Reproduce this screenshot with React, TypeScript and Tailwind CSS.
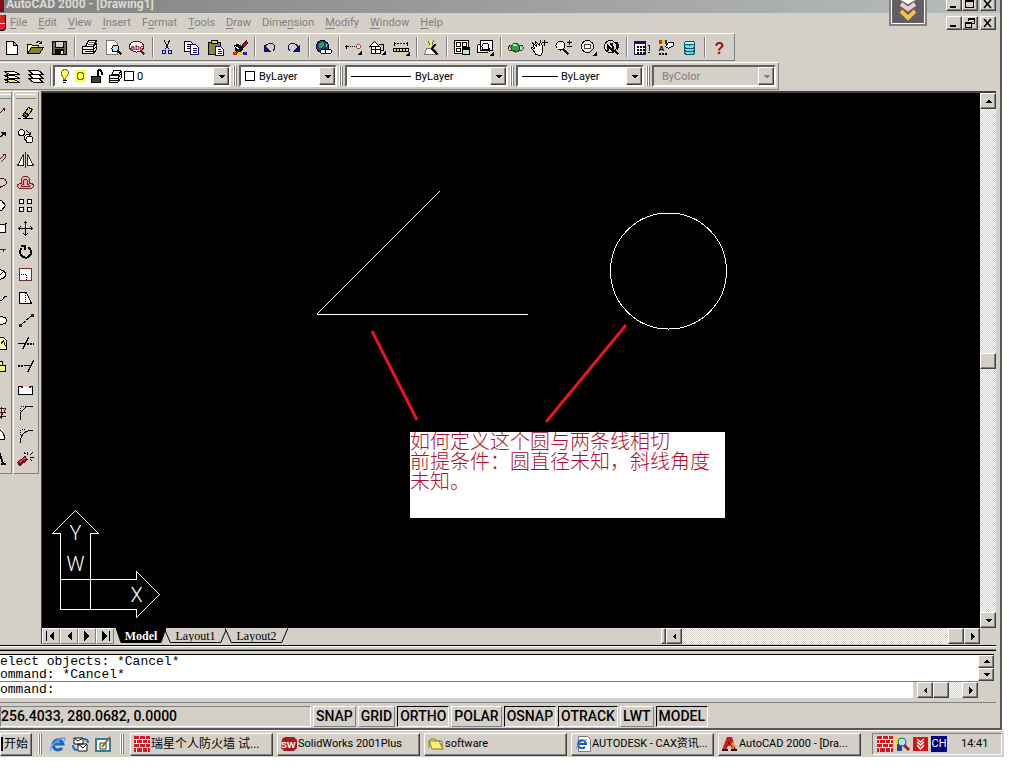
import type { ReactNode } from 'react';
import clsx from 'clsx';

const RAISED =
  'border border-t-white border-l-white border-r-[#404040] border-b-[#404040] bg-[#d4d0c8] shadow-[inset_-1px_-1px_0_#808080]';
const SUNKEN = 'border border-t-[#808080] border-l-[#808080] border-r-white border-b-white';
const TRACK = 'bg-[repeating-conic-gradient(#ffffff_0_25%,#d4d0c8_0_50%)] bg-[length:2px_2px]';

const MENUS = [
  ['', 'F', 'ile'],
  ['', 'E', 'dit'],
  ['', 'V', 'iew'],
  ['', 'I', 'nsert'],
  ['F', 'o', 'rmat'],
  ['', 'T', 'ools'],
  ['', 'D', 'raw'],
  ['Dime', 'n', 'sion'],
  ['', 'M', 'odify'],
  ['', 'W', 'indow'],
  ['', 'H', 'elp'],
];

const STANDARD_ICONS: Record<string, ReactNode> = {
  New: <path d="M4 3h7l4 4v9H4zM11 3v4h4" fill="#fff" />,
  Open: (
    <>
      <path d="M1 15V6h4l1 1h6v3" fill="#ffff9c" />
      <path d="M1 15l4-6h12l-4 6z" fill="#84842c" />
      <path d="M10 4q3-2 5 1M15 2v3h-3" />
    </>
  ),
  Save: (
    <>
      <path d="M2 3h14v13H2z" fill="#6b6b3c" />
      <path d="M5 3h8v6H5z" fill="#d4d0c8" />
      <path d="M5 11h8v5H5z" fill="#111" />
      <path d="M11 12v3" stroke="#fff" strokeWidth="2" />
    </>
  ),
  Print: (
    <>
      <path d="M5 8l3-6h8l-3 6z" fill="#fff" />
      <path d="M8 4h6M7 6h6" stroke="#666" />
      <path d="M2 8h11l3-3v6l-3 4H2z" fill="#eeece8" />
      <path d="M2 11h11l3-3M4 13h8M13 8v7" />
    </>
  ),
  'Print Preview': (
    <>
      <path d="M2 2h8l3 3v11H2z" fill="#fff" stroke="#777" />
      <circle cx="11" cy="10" r="3.5" fill="#bde0ea" />
      <path d="M13 12l4 4" strokeWidth="2" />
    </>
  ),
  Find: (
    <>
      <ellipse cx="8" cy="8" rx="7" ry="5.5" fill="#fff" stroke="#701020" />
      <path d="M12 12l4 4" stroke="#701020" strokeWidth="2" />
      <text x="2" y="11" fontSize="8" fontWeight="bold" fill="#801020" stroke="none">abc</text>
    </>
  ),
  Cut: (
    <>
      <path d="M6 2l4 9M11 2l-4 9" />
      <circle cx="5.500" cy="13.500" r="2" stroke="#101080" />
      <circle cx="11.500" cy="13.500" r="2" stroke="#101080" />
    </>
  ),
  Copy: (
    <>
      <path d="M2 3h6l3 3v7H2zM4 6h3M4 8h5M4 10h5" fill="#fff" />
      <path d="M8 6h5l3 3v7H8zM10 10h4M10 12h4M10 14h4" fill="#fff" stroke="#101060" />
    </>
  ),
  Paste: (
    <>
      <path d="M2 4h12v12H2z" fill="#8a8448" />
      <path d="M5 2h6v3H5z" fill="#d9d06a" />
      <path d="M9 8h5l3 3v6H9zM11 11h3M11 13h4M11 15h4" fill="#fff" stroke="#101080" />
    </>
  ),
  'Match Properties': (
    <>
      <path d="M12 6l4-4 1 3-4 4z" fill="#a01010" stroke="#600" />
      <path d="M4 7l4-1 5 3-3 4-4 1z" fill="#111" />
      <path d="M5 8l4 3" stroke="#fff" />
      <path d="M2 15h4" stroke="#e02020" strokeWidth="3" />
      <path d="M7 15h4" stroke="#f0d020" strokeWidth="3" />
      <path d="M12 15h4" stroke="#2020c0" strokeWidth="3" />
    </>
  ),
  Undo: (
    <>
      <path d="M4 9c3-6 11-5 10 0c0 2-1 3-2 4" stroke="#101070" />
      <path d="M3 6v7h7z" fill="#101070" stroke="none" />
    </>
  ),
  Redo: (
    <>
      <path d="M14 9c-3-6-11-5-10 0c0 2 1 3 2 4" stroke="#101070" />
      <path d="M15 6v7H8z" fill="#101070" stroke="none" />
    </>
  ),
  Hyperlink: (
    <>
      <circle cx="8" cy="8" r="6" fill="#183c90" />
      <path d="M4 5l4-2 2 3-3 4-3-1z" fill="#28a048" stroke="none" />
      <path d="M11 4l2 3-2 2z" fill="#88d0e0" stroke="none" />
      <rect x="6" y="11" width="6" height="4" rx="2" fill="#fff" />
      <rect x="11" y="11" width="6" height="4" rx="2" fill="#fff" />
    </>
  ),
  'Temporary Tracking': (
    <>
      <path d="M1 8h13" strokeDasharray="1 1" />
      <path d="M2 6v4M0 8h4" />
      <circle cx="14" cy="8" r="2" stroke="#c04050" fill="#fff" />
      <path d="M17 12v4h-4z" fill="#000" stroke="none" />
    </>
  ),
  UCS: (
    <>
      <path d="M3 8v7h9V8M1 8l5-5 5 5z" fill="#fff" />
      <path d="M3 11h8M7 8v7M10 6h5v6h-4" />
      <path d="M17 12v4h-4z" fill="#000" stroke="none" />
    </>
  ),
  Distance: (
    <>
      <path d="M1 5h15" strokeDasharray="2 1" />
      <path d="M2 3v4M15 3v4" />
      <path d="M1 10h15v3H1z" fill="#e8e060" />
      <path d="M4 10v2M7 10v2M10 10v2M13 10v2" />
      <path d="M17 13v4h-4z" fill="#000" stroke="none" />
    </>
  ),
  'Redraw All': (
    <>
      <path d="M4 10h7l5 6H2z" fill="#fff" stroke="#777" />
      <path d="M9 10l4-4M9 10l6 6" strokeWidth="2" />
      <path d="M6 2c0 4 2 6 4 8M11 2L9 8" stroke="#706c00" />
      <path d="M8 2l1 6" stroke="#f4f060" strokeWidth="2" />
    </>
  ),
  'Aerial View': (
    <>
      <path d="M2 2h14v13H2z" fill="#fff" />
      <path d="M4 4h4v4H4zM4 10h4v3H4zM10 4h4v4h-4z" />
      <path d="M10 9h7v7h-7z" fill="#b8e0d8" />
      <path d="M10 10h7" strokeWidth="2" />
    </>
  ),
  'Named Views': (
    <>
      <path d="M4 2h12v10H4zM1 6h3M1 6v8h10" fill="#fff" />
      <circle cx="9" cy="8" r="3.500" />
      <path d="M12 10l2 3" strokeWidth="2" />
      <path d="M17 13v4h-4z" fill="#000" stroke="none" />
    </>
  ),
  '3D Orbit': (
    <>
      <circle cx="9" cy="9" r="4.5" fill="#30a048" stroke="#105020" />
      <path d="M6 7C0 7 0 12 6 12c6 2 12-1 11-3-1-3-4-2-4-1" stroke="#404010" />
      <path d="M7 7l3-1" stroke="#b0f0b0" strokeWidth="2" />
    </>
  ),
  'Pan Realtime': (
    <>
      <path d="M5 16c-1-4-4-5-4-7l3 1-2-6 4 4-1-5 4 4 1-4 2 5v6l-2 3z" fill="#fff" />
      <path d="M14 1v6M11 4h6" />
    </>
  ),
  'Zoom Realtime': (
    <>
      <circle cx="6" cy="7" r="4.500" fill="#fff" />
      <path d="M9 11l5 5" strokeWidth="2" />
      <path d="M12 4h5M14.500 1v5M12 8h5" />
    </>
  ),
  'Zoom Window': (
    <>
      <circle cx="9" cy="8" r="6" fill="#eee" />
      <path d="M6 6h6v4H6z" stroke="#444" fill="#fff" />
      <path d="M18 13v4h-4z" fill="#000" stroke="none" />
    </>
  ),
  'Zoom Previous': (
    <>
      <circle cx="8" cy="8" r="6" fill="#ddd" />
      <path d="M5 12V7l5 5V7q0-2-3-2" strokeWidth="2" />
      <path d="M12 12l4 4M14 4q3 3 0 7" strokeWidth="2" />
    </>
  ),
  Properties: (
    <>
      <path d="M2 3h11v13H2z" fill="#fff" stroke="#101060" />
      <path d="M2 4h11" stroke="#101080" strokeWidth="2" />
      <path d="M4 8h8M4 11h8M4 14h8" strokeDasharray="2 1" strokeWidth="2" />
      <path d="M15 7h2v5M15 14h2" stroke="#101080" />
    </>
  ),
  DesignCenter: (
    <>
      <path d="M2 3h3" stroke="#e02020" strokeWidth="4" />
      <path d="M5 3h3" stroke="#e8d020" strokeWidth="4" />
      <path d="M8 3h2" stroke="#2020a0" strokeWidth="4" />
      <text x="2" y="12" fontSize="8" fontWeight="bold" fill="#000" stroke="none">A</text>
      <path d="M2 15h9" strokeDasharray="2 1" strokeWidth="2" />
      <path d="M9 8l3-4h5v3l-5 3z" fill="#fff" />
    </>
  ),
  dbConnect: (
    <>
      <path d="M4 4v10c0 3 10 3 10 0V4" fill="#68dce8" stroke="#105868" />
      <ellipse cx="9" cy="4.500" rx="5" ry="2" fill="#c0f4f8" stroke="#105868" />
      <path d="M4 8c0 3 10 3 10 0M4 11c0 3 10 3 10 0" stroke="#105868" />
    </>
  ),
  Help: (
    <text x="4" y="15" fontSize="16" fontWeight="bold" fill="#9c1018" stroke="none">?</text>
  ),
};

const STANDARD_GROUPS = [
  ['New', 'Open', 'Save'],
  ['Print', 'Print Preview', 'Find'],
  ['Cut', 'Copy', 'Paste', 'Match Properties'],
  ['Undo', 'Redo'],
  ['Hyperlink'],
  ['Temporary Tracking', 'UCS', 'Distance'],
  ['Redraw All'],
  ['Aerial View', 'Named Views'],
  ['3D Orbit', 'Pan Realtime', 'Zoom Realtime', 'Zoom Window', 'Zoom Previous'],
  ['Properties', 'DesignCenter', 'dbConnect'],
  ['Help'],
];

// The draw toolbar is docked half off the window, only the right part of each icon shows
const DRAW_TOOLS: { name: string; icon: ReactNode }[] = [
  { name: 'Line', icon: <path d="M0 9l4-4M3 4h2v2" stroke="#401010" /> },
  { name: 'Construction Line', icon: <path d="M0 10l5-4M2 5h4v3z" fill="#000" /> },
  { name: 'Multiline', icon: <path d="M0 9l5-5M1 12l5-5M3 4h3v3" stroke="#502020" /> },
  { name: 'Polyline', icon: <path d="M0 5h3q4 1 4 4t-5 4H0M1 12v2" stroke="#401010" /> },
  { name: 'Polygon', icon: <path d="M0 4h2l4 5-4 5H0" fill="#fff" /> },
  { name: 'Rectangle', icon: <path d="M0 5h6v8H0M5 4h2" fill="#fff" /> },
  { name: 'Arc', icon: <path d="M0 7h6M4 6v3" stroke="#601010" /> },
  { name: 'Circle', icon: <path d="M0 4q6 1 6 5t-6 5M0 10l3-3" fill="#fff" /> },
  { name: 'Spline', icon: <path d="M0 12q3 1 5-4h2" /> },
  { name: 'Ellipse', icon: <path d="M0 5q7 0 7 4t-7 4" fill="#fff" /> },
  { name: 'Insert Block', icon: <path d="M0 3h4l3 3v9H0M1 10l3-4 2 6" fill="#ffffb0" /> },
  { name: 'Make Block', icon: <path d="M0 4h3v4h3v6H0M0 8h3" fill="#f4f080" /> },
  { name: 'Point', icon: null },
  { name: 'Hatch', icon: <path d="M0 5h6M0 9h6M0 13h6M2 3v12M0 15l6-9" stroke="#401818" /> },
  { name: 'Region', icon: <path d="M0 4q5 1 5 9H0" fill="#fff" /> },
  { name: 'Multiline Text', icon: <path d="M0 4l4 11M1 14h5" strokeWidth="2" /> },
];

const MODIFY_TOOLS: { name: string; icon: ReactNode }[] = [
  {
    name: 'Erase',
    icon: (
      <>
        <path d="M6 11l6-8 4 2-6 8z" fill="#d4d060" />
        <path d="M6 11l2-3 4 2-2 3z" fill="#6c4090" />
        <path d="M1 14h3M6 14h10" />
      </>
    ),
  },
  {
    name: 'Copy Object',
    icon: (
      <>
        <circle cx="5" cy="5" r="3" fill="#fff" />
        <circle cx="11" cy="10" r="3" fill="#fff" />
        <circle cx="13" cy="12" r="3.5" fill="#fff" />
        <path d="M10 3l4 4M14 4v3h-3" />
      </>
    ),
  },
  { name: 'Mirror', icon: <path d="M7 4v11H1zM11 4v11h6zM9 1v16" fill="#fff" stroke="#402020" /> },
  {
    name: 'Offset',
    icon: (
      <path
        d="M3 15q-2-1-2-3t4-2q-1-7 4-7t4 7q4 0 4 2t-2 3zM5 13q0-2 2-2-1-5 2-5t2 5q2 0 2 2z"
        fill="#f4a8ac"
        stroke="#702030"
      />
    ),
  },
  { name: 'Array', icon: <path d="M3 3h4v4H3zM11 3h4v4h-4zM3 11h4v4H3zM11 11h4v4h-4z" fill="#fff" /> },
  { name: 'Move', icon: <path d="M9 2v14M2 9h14M7 4l2-2 2 2M7 14l2 2 2-2M4 7L2 9l2 2M14 7l2 2-2 2" /> },
  { name: 'Rotate', icon: <path d="M5 6a5.500 5.500 0 1 0 7-1M4 3h4v4" strokeWidth="2" /> },
  {
    name: 'Scale',
    icon: (
      <>
        <path d="M3 3h12v12H3z" fill="#fff" stroke="#802030" />
        <path d="M4 9h6v6" strokeDasharray="1 1" />
      </>
    ),
  },
  {
    name: 'Stretch',
    icon: (
      <>
        <path d="M3 4h7l5 11H3z" fill="#fff" />
        <path d="M9 4v11" strokeDasharray="1 1" />
      </>
    ),
  },
  {
    name: 'Lengthen',
    icon: (
      <>
        <path d="M4 14L15 4" strokeDasharray="3 1" />
        <path d="M2 14h3M14 4h3" stroke="#501010" strokeWidth="3" />
      </>
    ),
  },
  {
    name: 'Trim',
    icon: (
      <>
        <path d="M1 9h8M6 15l6-12" />
        <path d="M10 9h7" strokeDasharray="2 1" strokeWidth="2" />
      </>
    ),
  },
  {
    name: 'Extend',
    icon: (
      <>
        <path d="M11 15l6-12M7 8h7" />
        <path d="M1 8h6" strokeDasharray="2 1" strokeWidth="2" />
      </>
    ),
  },
  {
    name: 'Break',
    icon: (
      <>
        <path d="M2 6h14v8H2z" fill="#fff" />
        <path d="M6 6h6" stroke="#d4d0c8" />
        <path d="M5 5v2M13 5v2" stroke="#701010" strokeWidth="2" />
      </>
    ),
  },
  {
    name: 'Chamfer',
    icon: (
      <>
        <path d="M4 16V9l6-6h6" />
        <path d="M4 7V3h5" strokeDasharray="1 1" />
      </>
    ),
  },
  {
    name: 'Fillet',
    icon: (
      <>
        <path d="M4 16q0-12 12-12" />
        <path d="M4 8V3h5" strokeDasharray="1 1" />
      </>
    ),
  },
  {
    name: 'Explode',
    icon: (
      <>
        <path d="M2 15l8-7" stroke="#601018" strokeWidth="5" />
        <path d="M3 13l6-5" stroke="#d83848" strokeWidth="2" />
        <path d="M11 5V2M13 6l3-3M13 8h4M9 5L8 3M14 10l2 2" />
      </>
    ),
  },
];

const STATUS_MODES = [
  { name: 'SNAP', on: false },
  { name: 'GRID', on: false },
  { name: 'ORTHO', on: true },
  { name: 'POLAR', on: false },
  { name: 'OSNAP', on: true },
  { name: 'OTRACK', on: true },
  { name: 'LWT', on: false },
  { name: 'MODEL', on: true },
];

function Icon({ children, width = 18 }: { children?: ReactNode; width?: number }) {
  return (
    <svg
      width={width}
      height="18"
      viewBox={`0 0 ${width} 18`}
      fill="none"
      stroke="#000"
      shapeRendering="crispEdges"
      fontFamily="Liberation Sans, sans-serif"
      className="shrink-0 overflow-visible"
      aria-hidden="true"
    >
      <g transform="translate(-.5 .5)">{children}</g>
    </svg>
  );
}

function Bricks() {
  return (
    <svg width="16" height="16" viewBox="0 0 16 16" shapeRendering="crispEdges" className="shrink-0" aria-hidden="true">
      <path d="M0 0h16v16H0z" fill="#d81820" />
      <path d="M0 3.500h16M0 7.500h16M0 11.500h16M5.500 0v3M11.500 0v3M2.500 4v3M8.500 4v3M13.500 4v3M5.500 8v3M11.500 8v3M2.500 12v4M8.500 12v4M13.500 12v4" stroke="#fff" />
    </svg>
  );
}

function ExplorerLogo() {
  return (
    <svg width="17" height="17" viewBox="0 0 17 17" fill="none" className="shrink-0" aria-hidden="true">
      <path d="M13 12a5 5 0 1 1 1-4H5" stroke="#1c64c8" strokeWidth="3" />
      <path d="M2 15C-1 13 8 2 15 2c2 0 1 2 0 3" stroke="#58a8e8" strokeWidth="1.500" />
    </svg>
  );
}

function AutoCadLogo() {
  return (
    <svg width="16" height="16" viewBox="0 0 16 16" className="shrink-0" aria-hidden="true">
      <path d="M5 1h5l4 13h-4l-1-4H6l-2 4H0z" fill="#c81820" />
      <path d="M7 5l1 3H6zM0 13h6v2H0z" fill="#300808" />
      <path d="M9 8h3v2h3M11 6v7" stroke="#e8c020" fill="none" />
      <path d="M9 14h6" stroke="#300808" strokeWidth="2" />
    </svg>
  );
}

const ARROWS = {
  up: 'M1 6h7L4.500 2.500z',
  down: 'M1 3h7L4.500 6.500z',
  left: 'M6 1v7L2.500 4.500z',
  right: 'M3 1v7l3.500-3.500z',
};

function Arrow({ dir, bar, gray }: { dir: keyof typeof ARROWS; bar?: boolean; gray?: boolean }) {
  return (
    <svg width="9" height="9" viewBox="0 0 9 9" shapeRendering="crispEdges" fill={gray ? '#808080' : '#000'} aria-hidden="true">
      <path d={ARROWS[dir]} />
      {bar && <path d={dir === 'left' ? 'M0 0h1v9H0z' : 'M8 0h1v9H8z'} />}
    </svg>
  );
}

function SheetArrow({ dir, bar }: { dir: 'left' | 'right'; bar: boolean }) {
  return (
    <svg width="10" height="10" viewBox="0 0 10 10" shapeRendering="crispEdges" aria-hidden="true">
      <path d={dir === 'left' ? 'M8 0v10L3 5z' : 'M2 0v10l5-5z'} />
      {bar && <path d={dir === 'left' ? 'M0 0h1v10H0z' : 'M9 0h1v10H9z'} />}
    </svg>
  );
}

function ScrollButton({ dir, className }: { dir: keyof typeof ARROWS; className: string }) {
  return (
    <button type="button" aria-label={`Scroll ${dir}`} className={clsx('flex shrink-0 items-center justify-center', RAISED, className)}>
      <Arrow dir={dir} />
    </button>
  );
}

function Divider() {
  return (
    <div className="flex w-1.5 shrink-0 justify-center">
      <div className="h-5 w-0.5 border-l border-[#808080] bg-white" />
    </div>
  );
}

function Grip() {
  return (
    <div className="flex shrink-0 px-0.5">
      <div className="h-5 w-0.5 border-r border-[#808080] bg-white" />
      <div className="h-5 w-0.5 border-r border-[#808080] bg-white" />
    </div>
  );
}

function Combo({ label, value, className, pad, disabled, children }: {
  label: string;
  value: string;
  className: string;
  pad: string;
  disabled?: boolean;
  children?: ReactNode;
}) {
  return (
    <div
      className={clsx(
        'relative flex h-[22px] shrink-0 border-2 border-t-[#606060] border-l-[#606060] border-r-white border-b-white',
        disabled ? 'bg-[#d4d0c8]' : 'bg-white',
        className,
      )}
    >
      <select
        aria-label={label}
        disabled={disabled}
        className={clsx(
          'w-full appearance-none bg-transparent pt-0.5 text-[11px] leading-4',
          disabled ? 'text-[#808080]' : 'text-black',
          pad,
        )}
      >
        <option>{value}</option>
      </select>
      <div className="pointer-events-none absolute inset-y-0 left-1 flex items-center">{children}</div>
      <div className={clsx('pointer-events-none absolute inset-y-0 right-0 flex w-4 items-center justify-center', RAISED)}>
        <Arrow dir="down" gray={disabled} />
      </div>
    </div>
  );
}

function WindowButtons({ restore }: { restore?: boolean }) {
  return (
    <div className="flex shrink-0">
      <button type="button" aria-label="Minimize" className={clsx('h-3.5 w-4', RAISED)}>
        <svg width="12" height="12" shapeRendering="crispEdges"><path d="M3 8h6v2H3z" /></svg>
      </button>
      <button type="button" aria-label="Maximize" className={clsx('mr-0.5 h-3.5 w-4', RAISED)}>
        <svg width="13" height="12" fill="none" stroke="#000" shapeRendering="crispEdges">
          <path d={restore ? 'M5.500 4V1.500h6v5H9M5 2.500h7M2.500 5.500h6v5h-6zM2 6.500h7' : 'M2.500 2.500h8v7h-8zM2 3.500h9'} />
        </svg>
      </button>
      <button type="button" aria-label="Close" className={clsx('h-3.5 w-4', RAISED)}>
        <svg width="13" height="12" stroke="#000" strokeWidth="1.500"><path d="M3 2l7 8M10 2l-7 8" /></svg>
      </button>
    </div>
  );
}

function MenuBar() {
  return (
    <div className="flex h-5 items-center">
      <div className="mr-1 h-4 w-1.5 shrink-0 rounded-br border-r border-b border-black bg-[#d82028]">
        <div className="mt-2 h-px bg-white" />
      </div>
      <nav className="flex grow gap-[11px] text-[11px] text-[#808080]">
        {MENUS.map(([before, key, after]) => (
          <button type="button" key={before + key + after}>
            {before}<span className="underline underline-offset-2">{key}</span>{after}
          </button>
        ))}
      </nav>
      <WindowButtons restore />
    </div>
  );
}

function StandardToolbar() {
  return (
    <div className="flex h-7 items-center self-start border border-l-0 border-t-white border-r-[#808080] border-b-[#808080]">
      {STANDARD_GROUPS.map((group, i) => (
        <div key={group[0]} className="flex items-center">
          {i > 0 && <Divider />}
          {group.map((name) => (
            <button type="button" key={name} aria-label={name} className="flex w-6 justify-center">
              <Icon>{STANDARD_ICONS[name]}</Icon>
            </button>
          ))}
        </div>
      ))}
      <div className="w-0.5" />
    </div>
  );
}

function LayerToolbar() {
  return (
    <div className="mt-px flex h-7 items-center self-start border border-l-0 border-t-white border-r-[#808080] border-b-[#808080] pr-0.5">
      <button type="button" aria-label="Make Object's Layer Current" className="flex w-6 justify-center">
        <Icon>
          <path d="M2 12h10l5 3H7z" fill="#f4f070" />
          <path d="M2 8h10l5 3H7z" fill="#fff" />
          <path d="M2 4h10l5 3H7z" fill="#fff" />
          <path d="M5 7v8H2M5 7H3" />
        </Icon>
      </button>
      <button type="button" aria-label="Layers" className="flex w-6 justify-center">
        <Icon>
          <path d="M2 11h10l5 4H7z" fill="#fff" />
          <path d="M2 7h10l5 4H7z" fill="#fff" />
          <path d="M2 3h10l5 4H7z" fill="#fff" />
        </Icon>
      </button>
      <div className="w-[5px]"><Divider /></div>
      <Combo label="Layer" value="0" className="w-[178px]" pad="pl-[82px]">
        <svg width="76" height="16" viewBox="0 0 76 16" fill="none" stroke="#000" shapeRendering="crispEdges" aria-hidden="true">
          <path d="M4.500 11c0-3-3-3-2-7 1-3 6-3 7 0 0 4-3 4-3 7z" fill="#ffff50" stroke="#88802c" />
          <path d="M4 12h4M4 14h3" />
          <path d="M16 2h11v12H16z" fill="#ffff40" stroke="none" />
          <circle cx="21.500" cy="8" r="3.500" stroke="#706c10" />
          <path d="M32 8h9v6h-9z" fill="#404020" />
          <path d="M38.500 8V4q2-4 4 0v3" strokeWidth="2" />
          <path d="M53 6l2-4h7l-2 4z" fill="#fff" />
          <path d="M50 7h9l3-3v6l-3 4h-9zM50 10h9l3-4M59 7v7M51 12h8" fill="#eee" />
          <path d="M65.500 3.500h9v9h-9z" fill="#fff" />
        </svg>
      </Combo>
      <Grip />
      <Combo label="Color" value="ByLayer" className="w-[98px]" pad="pl-[18px]">
        <div className="size-2.5 border border-black bg-white" />
      </Combo>
      <Grip />
      <Combo label="Linetype" value="ByLayer" className="w-[163px]" pad="pl-[68px]">
        <div className="h-px w-[60px] bg-black" />
      </Combo>
      <Grip />
      <Combo label="Lineweight" value="ByLayer" className="w-[128px]" pad="pl-[43px]">
        <div className="h-px w-9 bg-black" />
      </Combo>
      <Grip />
      <Combo label="Plot Style" value="ByColor" className="w-[124px]" pad="pl-2" disabled />
    </div>
  );
}

function SideToolbars() {
  return (
    <div className="flex shrink-0 items-start pr-0.5">
      <div className="w-3 border-r border-b border-t border-t-white border-r-[#808080] border-b-[#808080] pb-1">
        <div className="my-0.5 h-[5px] border-y border-t-white border-b-[#808080]" />
        {DRAW_TOOLS.map((tool) => (
          <button type="button" key={tool.name} aria-label={tool.name} className="flex h-[23px] w-full items-center">
            <Icon width={8}>{tool.icon}</Icon>
          </button>
        ))}
      </div>
      <div className="ml-px w-[26px] border border-t-white border-l-white border-r-[#808080] border-b-[#808080] pb-1">
        <div className="mx-0.5 my-0.5 h-[5px] border-y border-t-white border-b-[#808080]" />
        {MODIFY_TOOLS.map((tool) => (
          <button type="button" key={tool.name} aria-label={tool.name} className="flex h-[23px] w-full items-center justify-center">
            <Icon>{tool.icon}</Icon>
          </button>
        ))}
      </div>
    </div>
  );
}

function Drawing() {
  return (
    <div className="relative grow overflow-hidden bg-black">
      <svg className="absolute inset-0 size-full" fill="none" stroke="#fff" aria-hidden="true">
        <g shapeRendering="crispEdges">
          <path d="M398 98L275 221" />
          <path d="M275 221.500H486" />
          <circle cx="626.500" cy="178" r="58" />
        </g>
        <path d="M330 238l45 89M584 232l-80 97" stroke="#e8141e" strokeWidth="3" />
      </svg>

      <p className="absolute top-[339px] left-[368px] h-[86px] w-[315px] bg-white text-[20px] leading-5 font-light text-[#b0102c]">
        如何定义这个圆与两条线相切
        <br />
        前提条件：圆直径未知，斜线角度
        <br />
        未知。
      </p>

      {/* UCS icon */}
      <svg width="125" height="125" className="absolute bottom-0 left-0" fill="none" stroke="#fff" shapeRendering="crispEdges" aria-hidden="true">
        <path d="M18.500 106.500V30.500H10.500L33.500 7.500L56.500 30.500H48.500V106.500" />
        <path d="M18.500 76.500H94.500V68.500L117.500 91.500L94.500 114.500V106.500H18.500" />
        <g fill="#fff" stroke="none" fontFamily="Roboto, sans-serif" fontWeight="300" fontSize="20" textAnchor="middle">
          <text x="33.500" y="37">Y</text>
          <text x="33.500" y="68">W</text>
          <text x="94.500" y="99">X</text>
        </g>
      </svg>
    </div>
  );
}

function SheetTab({ name, active, className }: { name: string; active?: boolean; className: string }) {
  return (
    <button type="button" className={clsx('relative h-full shrink-0 text-[12px] leading-4', active ? 'z-10 font-bold text-white' : 'text-black', className)}>
      <svg className="absolute inset-0 size-full" viewBox="0 0 60 16" preserveAspectRatio="none" aria-hidden="true">
        <path d="M0 0l6 14.500h48L60 0" fill={active ? '#000' : '#d4d0c8'} stroke="#000" vectorEffect="non-scaling-stroke" />
      </svg>
      <span className="relative">{name}</span>
    </button>
  );
}

function SheetBar() {
  return (
    <div className="flex h-4 shrink-0">
      {(['left', 'left', 'right', 'right'] as const).map((dir, i) => (
        <button
          type="button"
          key={i}
          aria-label={['First sheet', 'Previous sheet', 'Next sheet', 'Last sheet'][i]}
          className="flex w-[18px] shrink-0 items-center justify-center border border-t-white border-l-white border-r-[#808080] border-b-[#808080]"
        >
          <SheetArrow dir={dir} bar={i === 0 || i === 3} />
        </button>
      ))}
      <div className="ml-0.5 flex grow font-['Liberation_Serif',serif]">
        <SheetTab name="Model" active className="w-[50px]" />
        <SheetTab name="Layout1" className="-ml-0.5 w-[63px]" />
        <SheetTab name="Layout2" className="-ml-0.5 w-[63px]" />
      </div>
      <div className="flex w-[34%] shrink-0">
        <div className={clsx('w-[5px]', RAISED)} />
        <ScrollButton dir="left" className="w-4" />
        <div className={clsx('grow', TRACK)} />
        <div className={clsx('w-4', RAISED)} />
        <ScrollButton dir="right" className="w-4" />
      </div>
    </div>
  );
}

function CommandWindow() {
  return (
    <div className="mr-0.5 border-t border-black font-['Liberation_Mono',monospace] text-[13px] text-black">
      <div className="flex h-[26px] bg-white">
        <div className="grow leading-[13px] whitespace-pre">
          elect objects: *Cancel*
          <br />
          ommand: *Cancel*
        </div>
        <div className="flex w-4 flex-col">
          <ScrollButton dir="up" className="h-[13px]" />
          <ScrollButton dir="down" className="h-[13px]" />
        </div>
      </div>
      <div className="mr-4 flex h-[17px] border-t border-[#808080]">
        <label htmlFor="command" className="bg-white leading-4">ommand:</label>
        <input id="command" className="min-w-0 grow bg-white outline-none" />
        <div className="ml-1 flex w-[61px]">
          <ScrollButton dir="left" className="w-4" />
          <div className={clsx('w-4', RAISED)} />
          <div className={clsx('grow', TRACK)} />
          <ScrollButton dir="right" className="w-4" />
        </div>
      </div>
    </div>
  );
}

function StatusBar() {
  return (
    <div className="mb-px flex h-[21px] gap-0.5 text-[14px] font-medium text-black">
      <div className={clsx('flex w-[311px] shrink-0 items-center', SUNKEN)}>256.4033, 280.0682, 0.0000</div>
      {STATUS_MODES.map((mode) => (
        <button
          type="button"
          key={mode.name}
          aria-pressed={mode.on}
          className={clsx(
            'flex items-center border px-0.5',
            mode.on
              ? 'border-t-black border-l-black border-r-white border-b-white'
              : 'border-t-white border-l-white border-r-[#808080] border-b-[#808080]',
          )}
        >
          {mode.name}
        </button>
      ))}
    </div>
  );
}

function TaskButton({ icon, children }: { icon: ReactNode; children: ReactNode }) {
  return (
    <button
      type="button"
      className={clsx('flex h-[23px] max-w-36 min-w-0 flex-1 items-center gap-px pl-[3px] text-left whitespace-nowrap', RAISED)}
    >
      {icon}
      <span>{children}</span>
    </button>
  );
}

function TaskBar() {
  return (
    <footer className="flex h-[27px] items-center border-t border-white bg-[#d4d0c8] pr-0.5 text-[11px] text-black">
      <button type="button" className={clsx('flex h-[23px] w-8 shrink-0 items-center gap-px text-[12px]', RAISED)}>
        <span className="h-3.5 w-0.5 bg-black" />
        <span className="whitespace-nowrap">开始</span>
      </button>
      <div className="mx-1 shrink-0"><Grip /></div>
      <div className="flex w-[70px] shrink-0 items-center gap-1.5 pl-px">
        <a href="#explorer" aria-label="Internet Explorer"><ExplorerLogo /></a>
        <a href="#mail" aria-label="Outlook Express">
          <svg width="17" height="17" viewBox="0 0 17 17" fill="none" stroke="#111">
            <path d="M2 2h9v6H2zM6 8h9v7H6z" fill="#fff" />
            <path d="M6 8l5 4 4-4M2 2l4 3 5-3" />
            <path d="M1 9c0 4 2 5 4 5M12 3c3 0 4 2 4 4" stroke="#2868c8" strokeWidth="2" />
          </svg>
        </a>
        <a href="#desktop" aria-label="Show Desktop">
          <svg width="17" height="17" viewBox="0 0 17 17" fill="none">
            <path d="M1 3h14v12H1z" fill="#fff" stroke="#308098" strokeWidth="2" />
            <path d="M5 7h6v6H5z" stroke="#333" />
            <path d="M7 11l8-10" stroke="#806820" strokeWidth="2" />
          </svg>
        </a>
      </div>
      <div className="mr-1 shrink-0"><Grip /></div>
      <div className="flex min-w-0 grow gap-1 pr-[11px]">
        <TaskButton icon={<Bricks />}>
          <span className="text-[12px]">瑞星个人防火墙 试...</span>
        </TaskButton>
        <TaskButton
          icon={
            <svg width="16" height="16" viewBox="0 0 16 16" className="shrink-0" aria-hidden="true">
              <path d="M1 3l3-2h9l3 3v8l-3 3H3l-3-3z" fill="#a81820" />
              <text x="0" y="12" fontSize="9" fontWeight="bold" fill="#fff" fontFamily="Liberation Sans, sans-serif">SW</text>
            </svg>
          }
        >
          SolidWorks 2001Plus
        </TaskButton>
        <TaskButton
          icon={
            <svg width="16" height="16" viewBox="0 0 16 16" fill="#f8f078" stroke="#80782c" className="shrink-0" aria-hidden="true">
              <path d="M1 12V5l2-2h4l1 2h6v8" />
              <path d="M1 5h10l4 8H4z" />
            </svg>
          }
        >
          software
        </TaskButton>
        <TaskButton
          icon={
            <svg width="16" height="16" viewBox="0 0 16 16" fill="none" className="shrink-0" aria-hidden="true">
              <path d="M3.500 .5h9l3 3v12h-12z" fill="#fff" stroke="#778" />
              <path d="M10 11a4 4 0 1 1 1-3H4" stroke="#1858b8" strokeWidth="2" />
              <path d="M2 13C0 11 7 3 12 4" stroke="#4890d8" />
            </svg>
          }
        >
          AUTODESK - CAX资讯...
        </TaskButton>
        <TaskButton icon={<AutoCadLogo />}>AutoCAD 2000 - [Dra...</TaskButton>
      </div>
      <div className={clsx('flex h-[22px] w-[130px] shrink-0 items-center gap-0.5 pl-1', SUNKEN)}>
        <Bricks />
        <svg width="16" height="16" viewBox="0 0 16 16" aria-hidden="true">
          <path d="M1 2h5v12H1z" fill="#e8d830" />
          <path d="M2 8h5v7H2z" fill="#2840a8" />
          <circle cx="7" cy="6" r="4" fill="#b0e4f0" stroke="#186878" />
          <path d="M9 9l5 5" stroke="#a02020" strokeWidth="3" />
        </svg>
        <svg width="16" height="16" viewBox="0 0 16 16" fill="none" aria-hidden="true">
          <path d="M0 1h15v14H0z" fill="#d81018" />
          <path d="M4 3l3.500 3L11 3M4 6l3.500 3L11 6M4 9l3.500 4L11 9" stroke="#fff" strokeWidth="1.500" />
        </svg>
        <span className="h-4 w-4 bg-[#000080] text-center leading-4 text-white">CH</span>
        <time className="ml-3">14:41</time>
      </div>
    </footer>
  );
}

export default function App() {
  return (
    <div className="flex min-h-screen flex-col bg-white pr-5 pb-[11px] font-[Roboto,'Noto_Sans_CJK_SC',sans-serif]">
      <main className="relative mr-0.5 flex grow flex-col border-r-2 border-b-2 border-[#585858] bg-[#d4d0c8] pr-1">
        <header className="-mr-1 flex h-[13px] items-start overflow-hidden bg-linear-to-r from-[#828282] to-[#b8bcbc] pr-1">
          <div className="mr-0.5 h-3 w-1 shrink-0 bg-[#801018]" />
          <h1 className="grow text-[12px] leading-[9px] font-bold text-[#dcd9d2]">AutoCAD 2000 - [Drawing1]</h1>
          <div className="-mt-[3px]"><WindowButtons /></div>
        </header>
        <MenuBar />
        <StandardToolbar />
        <LayerToolbar />

        <div className="mt-px flex grow">
          <SideToolbars />
          <div className="flex min-w-0 grow flex-col border-t-2 border-l border-[#404040]">
            <div className="flex grow">
              <Drawing />
              <div className="flex w-4 shrink-0 flex-col">
                <ScrollButton dir="up" className="h-4" />
                <div className={clsx('grow', TRACK)} />
                <div className={clsx('h-4', RAISED)} />
                <div className={clsx('grow', TRACK)} />
                <ScrollButton dir="down" className="h-4" />
              </div>
            </div>
            <div className="pr-4"><SheetBar /></div>
          </div>
        </div>

        <div className="mt-px h-1.5 border-y border-black bg-[#d4d0c8] shadow-[inset_0_1px_0_#ffffff,inset_0_-1px_0_#808080]" />
        <div className="h-[3px]" />
        <CommandWindow />
        <div className="mt-1 mb-[3px] h-px bg-[#808080]" />
        <StatusBar />

        <div className="absolute top-0 right-[73px] flex h-[26px] w-[38px] justify-center border-2 border-t-0 border-[#808080] bg-[#606064] shadow-[inset_-1px_-1px_0_#ffffff,inset_1px_0_0_#ffffff]">
          <svg width="18" height="22" viewBox="0 0 18 22" fill="none" strokeWidth="4" aria-hidden="true">
            <path d="M2-2l7 4 7-4" stroke="#fff" />
            <path d="M2 4l7 5 7-5" stroke="#f4c8d0" />
            <path d="M2 11l7 7 7-7" stroke="#f8c040" />
          </svg>
        </div>
      </main>
      <TaskBar />
    </div>
  );
}
